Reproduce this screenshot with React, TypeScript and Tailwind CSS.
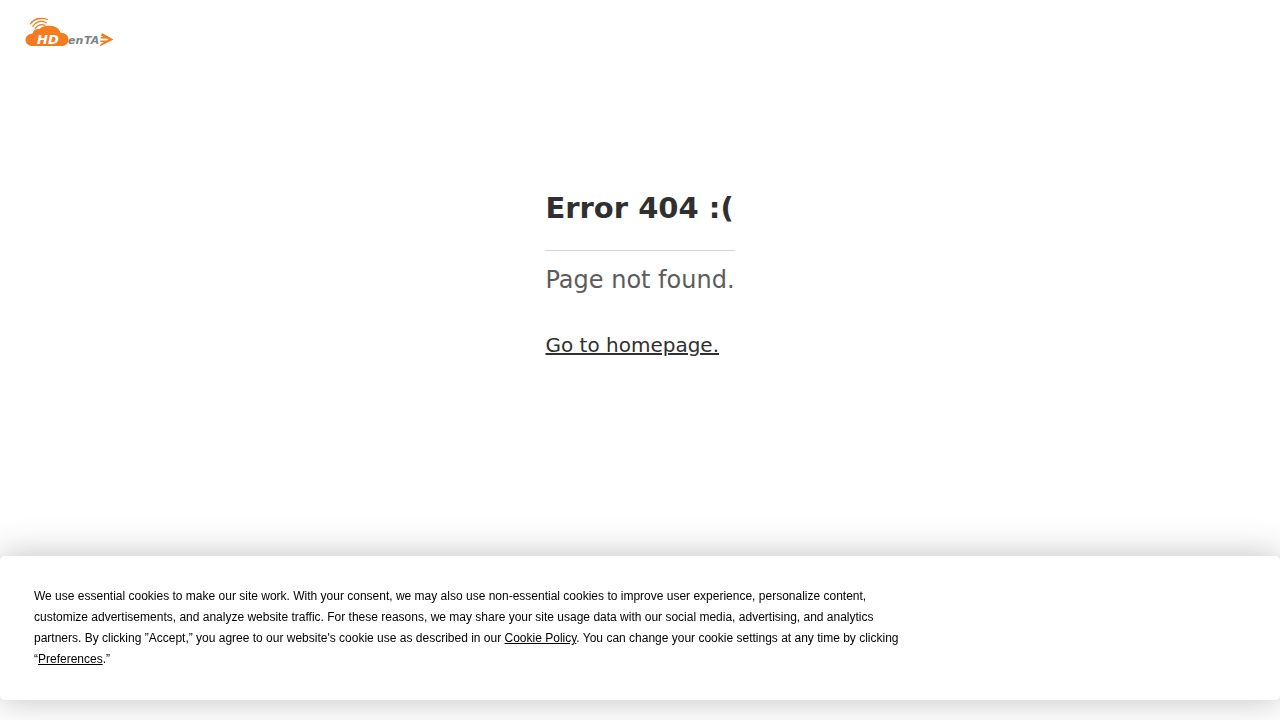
const Logo = () => {
    return (
        <svg className="h-8 w-[90px]" viewBox="0 0 90 32" role="img" aria-label="HDenta">
            {/* signal */}
            <g fill="none" stroke="#f37b20" strokeWidth="1.3" strokeLinecap="round">
                <path d="M6.5 8C10 2.5 17 1 23.500 3.500" />
                <path d="M8.800 10.300C12 5.800 17 4.400 22.300 6.500" />
                <path d="M11.200 12.300C14 8.900 17.500 7.800 21 9.300" />
            </g>
            {/* cloud */}
            <path
                fill="#f37b20"
                d="M8.500 30C4.500 30 1.500 27.500 1.500 24C1.500 20.500 4.500 17.800 8.500 17.500C9.500 14 12 12.600 15.200 13.200C17.200 10.800 21 9.400 26 9.700C31.500 10 35.500 12.400 36.500 16.800C41.500 17 44.500 19.800 44.500 23.500C44.500 27.500 41.800 30 37.500 30Z"
            />
            <g fontFamily="DejaVu Sans, sans-serif" fontWeight="700" fontStyle="italic">
                <text x="13" y="28" fontSize="13" fill="#ffffff">HD</text>
                <text x="44" y="28" fontSize="11" fill="#808285">en</text>
                <text x="60" y="28" fontSize="11" fill="#808285">TA</text>
            </g>
            {/* arrow */}
            <path
                fill="#f37b20"
                d="M78 17L89.500 23.500L75.500 30.500L77 27.800L84.500 23.500L77 19.800Z"
            />
            <path fill="#f37b20" d="M77 21H82.500L84 22.500H76.500ZM76.500 24.500H84L82 26H76Z" />
        </svg>
    );
};

const CookieBanner = () => {
    return (
        <section
            aria-label="Cookie consent"
            className="fixed inset-x-0 bottom-5 rounded-[5px] bg-white px-[34px] py-[30px] shadow-[0_0_36px_rgba(0,0,0,0.26)]"
        >
            <p className="max-w-[876px] font-['Liberation_Sans',Arial,sans-serif] text-xs leading-[21px] text-black">
                We use essential cookies to make our site work. With your consent, we may also use
                non-essential cookies to improve user experience, personalize content, customize
                advertisements, and analyze website traffic. For these reasons, we may share your
                site usage data with our social media, advertising, and analytics partners. By
                clicking ”Accept,” you agree to our website's cookie use as described in our{" "}
                <a href="#cookie-policy" className="underline">Cookie Policy</a>. You can change
                your cookie settings at any time by clicking{" "}
                <span className="whitespace-nowrap">
                    “<button type="button" className="cursor-pointer underline">Preferences</button>.”
                </span>
            </p>
        </section>
    );
};

const App = () => {
    return (
        <div className="min-h-screen bg-white font-['DejaVu_Sans',sans-serif]">
            <header className="flex h-16 items-center px-6">
                <a href="/">
                    <Logo />
                </a>
            </header>
            <main className="flex justify-center px-6 pt-[124px] pb-48">
                <div>
                    <h1 className="pb-[22px] text-[29px] leading-10 font-bold text-[#303030]">
                        Error 404 :(
                    </h1>
                    <hr className="border-[#d3d3d3]" />
                    <p className="pt-[11px] text-2xl leading-9 text-[#5c5c5c]">Page not found.</p>
                    <a
                        href="/"
                        className="mt-[33px] inline-block text-xl leading-7 text-[#303030] underline"
                    >
                        Go to homepage.
                    </a>
                </div>
            </main>
            <CookieBanner />
        </div>
    );
};

export default App;
